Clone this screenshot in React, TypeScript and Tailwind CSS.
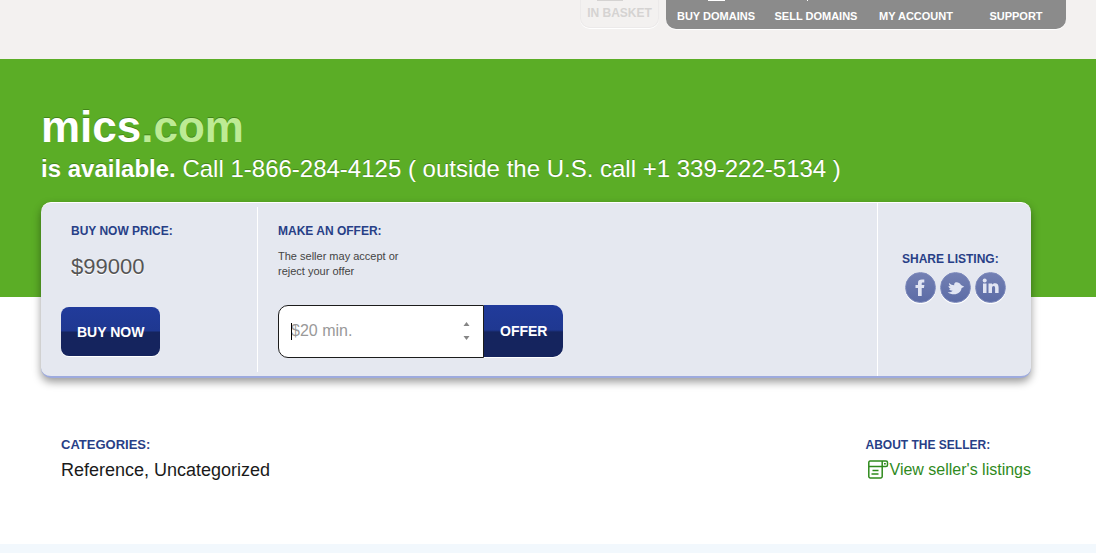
import type { ReactNode } from 'react';

function SectionLabel({ children }: { children: ReactNode }) {
  return <h2 className="text-[12px] leading-4 font-bold text-[#283f87]">{children}</h2>;
}

function NavItem({ label, icon }: { label: string; icon?: ReactNode }) {
  return (
    <a href="#" className="relative flex w-[100px] justify-center pt-2 text-[11px] leading-4 font-bold text-white">
      {icon}
      {label}
    </a>
  );
}

function SocialLink({ label, children }: { label: string; children: ReactNode }) {
  return (
    <a
      href="#"
      aria-label={label}
      className="block size-[31px] rounded-full border border-[#7d8abc] bg-linear-to-b from-[#7380b3] to-[#5c6ca6] shadow-[0_1px_0_#fff]"
    >
      <svg viewBox="0 0 29 29" className="size-full" fill="#e1e5f3" aria-hidden="true">
        {children}
      </svg>
    </a>
  );
}

const glossy =
  'bg-linear-to-b from-[#213b9b] from-0% via-[#1f3891] via-48% to-[#15245e] to-52% text-[14px] leading-4 font-bold text-white';

export default function App() {
  return (
    <div className="flex min-h-screen flex-col bg-white pr-[3px] font-['Liberation_Sans',Arial,sans-serif]">
      <header className="flex h-[59px] items-start justify-end gap-[7px] bg-[#f3f1f0] pr-[30px]">
        <a
          href="#"
          className="relative flex h-[28px] w-[79px] justify-center rounded-b-[10px] border-x border-b border-[#eceaea] pt-[5px] text-[12px] leading-4 font-bold text-[#d5d3d2] shadow-[0_1px_0_#fff]"
        >
          <span className="absolute top-0 left-4 h-px w-[26px] bg-[#d5d3d2]" />
          IN BASKET
        </a>
        <nav className="flex h-[29px] rounded-b-[10px] bg-[#8b8b8b] shadow-[0_1px_0_#fff]">
          <NavItem label="BUY DOMAINS" icon={<span className="absolute top-0 left-[42px] h-px w-[17px] bg-white" />} />
          <NavItem label="SELL DOMAINS" icon={<span className="absolute top-0 left-[41px] size-px bg-white" />} />
          <NavItem label="MY ACCOUNT" />
          <NavItem label="SUPPORT" />
        </nav>
      </header>

      <section className="bg-[#5bad26] pt-10 pr-[65px] pb-[113px] pl-[41px] text-white [text-shadow:0_-1px_0_#43861a]">
        <h1 className="text-[44px] leading-[55px] font-bold">
          mics<span className="text-[#bdeb94]">.com</span>
        </h1>
        <p className="text-[24px] leading-[30px]">
          <strong>is available.</strong> Call 1-866-284-4125 ( outside the U.S. call +1 339-222-5134 )
        </p>
      </section>

      <main className="relative -mt-[95px] flex-1 pr-[65px] pl-[41px]">
        <div className="flex h-[176px] rounded-[10px] border-t border-b-2 border-t-white border-b-[#9daade] bg-[#e5e8f0] shadow-[0_4px_8px_rgba(0,0,0,0.4)]">
          <section className="my-1 flex w-[217px] flex-col items-start border-r border-white px-5 pt-4">
            <div className="pl-[10px]">
              <SectionLabel>BUY NOW PRICE:</SectionLabel>
              <p className="mt-3 text-[22px] leading-8 text-[#555] [text-shadow:0_1px_0_#fff]">$99000</p>
            </div>
            <button type="button" className={`mt-6 h-[49px] rounded-lg px-4 shadow-[0_1px_0_#fff] ${glossy}`}>
              BUY NOW
            </button>
          </section>

          <section className="flex-1 px-5 pt-5">
            <SectionLabel>MAKE AN OFFER:</SectionLabel>
            <p className="mt-[10px] w-[130px] text-[11px] leading-[15px] text-[#444]">
              The seller may accept or reject your offer
            </p>
            <form className="mt-[26px] flex items-start" onSubmit={(e) => e.preventDefault()}>
              <div className="relative">
                <input
                  type="text"
                  inputMode="numeric"
                  aria-label="Your offer"
                  placeholder="$20 min."
                  className="block h-[53px] w-[206px] rounded-l-[10px] border border-[#1c1c1c] bg-white pb-[2px] pl-3 text-[16px] text-[#444] outline-none placeholder:text-[#999]"
                />
                <span className="absolute top-[18px] left-[13px] h-[17px] w-px bg-black" />
                <svg
                  viewBox="0 0 9 24"
                  className="absolute top-[14px] right-[13px] h-6 w-[9px]"
                  fill="#858585"
                  aria-hidden="true"
                >
                  <path d="M1.5 7 4.5 3l3 4ZM1.5 17h6l-3 4Z" />
                </svg>
              </div>
              <button type="submit" className={`h-[52px] rounded-r-[10px] px-4 shadow-[0_1px_0_#fff] ${glossy}`}>
                OFFER
              </button>
            </form>
          </section>

          <section className="w-[154px] border-l border-white pt-12 pl-6">
            <SectionLabel>SHARE LISTING:</SectionLabel>
            <div className="mt-[5px] flex gap-1 pl-[3px]">
              <SocialLink label="Facebook">
                <path d="M12 23v-8H9.5v-3H12v-2C12 7.3 13.4 6.5 16 6.5h2.3v3H17c-1 0-1.3.4-1.3 1.2V12h2.7l-.5 3h-2.2v8Z" />
              </SocialLink>
              <SocialLink label="Twitter">
                <path d="M8 10c1.8 1.6 3.4 2.2 5.2 2.3-.2-1.3.2-2.7 1.6-3 2.1-.3 4.1.6 5.2 2.7l3.3 1.7-2.7 1.2c-.7 3.9-3.4 6.3-7.6 6.3-2.4 0-4.5-.6-6.3-2 2 .2 3.7-.3 5-1.5-1.7.1-2.9-.4-3.6-1.6h1.7c-1.4-.7-2.2-1.8-2.3-3.2l2 .4c-1.2-1-1.8-2-1.5-3.3Z" />
              </SocialLink>
              <SocialLink label="LinkedIn">
                <path d="M7 10.5h3.5V20H7ZM12.5 10.5H16v1.2c.7-1 1.7-1.5 3-1.5 2.5 0 3.6 1.5 3.6 4.2V20h-3.5v-5c0-1.3-.4-2-1.4-2-1.1 0-1.7.8-1.7 2.1V20h-3.5Z" />
                <circle cx="8.7" cy="7.5" r="2" />
              </SocialLink>
            </div>
          </section>
        </div>

        <div className="flex justify-between pt-[59px] pb-10 pl-5">
          <section>
            <h2 className="text-[13px] leading-4 font-bold text-[#283f87]">CATEGORIES:</h2>
            <p className="mt-[7px] text-[18px] leading-5 text-[#1a1a1a]">Reference, Uncategorized</p>
          </section>
          <section>
            <SectionLabel>ABOUT THE SELLER:</SectionLabel>
            <a href="#" className="mt-[7px] flex items-center pl-[2px] text-[16px] leading-5 text-[#2f8a1d]">
              <svg
                viewBox="0 0 22 20"
                className="h-5 w-[22px]"
                fill="none"
                stroke="currentColor"
                strokeWidth="1.5"
                aria-hidden="true"
              >
                <path d="M18 1H2A1.5 1.5 0 0 0 .8 2.5v14A1.5 1.5 0 0 0 2.3 18h10.4a1.5 1.5 0 0 0 1.5-1.5V1M.8 6.5H18a1.5 1.5 0 0 0 1.5-1.5V2.5A1.5 1.5 0 0 0 18 1M4.5 10.5h6M3.5 14h7" />
                <path d="M16 3.8h1.8" />
              </svg>
              View seller's listings
            </a>
          </section>
        </div>
      </main>
      <footer className="h-[9px] bg-[#f2f8fd]" />
    </div>
  );
}
